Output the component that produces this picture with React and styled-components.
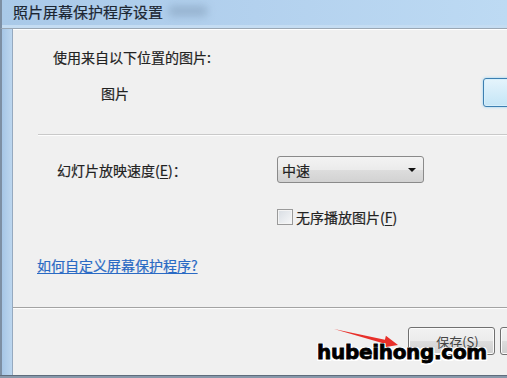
import styled, { createGlobalStyle } from 'styled-components';

const GlobalStyle = createGlobalStyle`
  html, body {
    margin: 0;
    padding: 0;
    background: #f0f0f0;
    overflow: hidden;
  }
  body {
    font-family: "Noto Sans CJK SC", "Noto Sans", sans-serif;
  }
`;

const Window = styled.div`
  position: relative;
  width: 507px;
  height: 378px;
  display: flex;
  flex-direction: column;
  overflow: hidden;
  background: #f0f0f0;
`;

const TitleBar = styled.div`
  height: 28px;
  flex-shrink: 0;
  display: flex;
  align-items: center;
  gap: 6px;
  padding-left: 11px;
  border-left: 2px solid #7d8fa3;
  border-bottom: 1px solid #9aa7b4;
  background: linear-gradient(90deg, #a9c9e8 0%, #b3d1ee 50%, #bddaf3 100%);
  box-shadow: inset 0 -3px 0 #c4dcf2;
`;

const Title = styled.span`
  font-size: 15px;
  line-height: 20px;
  color: #1c2632;
  margin-top: -5px;
  -webkit-text-stroke: 0.2px #1c2632;
`;

const Blur = styled.div`
  width: 38px;
  height: 10px;
  margin-top: -6px;
  background: #8eaac6;
  filter: blur(4px);
  opacity: 0.8;
`;

const Body = styled.div`
  flex: 1;
  display: flex;
  min-height: 0;
`;

const LeftFrame = styled.div`
  width: 10px;
  flex-shrink: 0;
  border-left: 2px solid #7d8fa3;
  border-right: 1px solid #95a9bf;
  background: linear-gradient(90deg, #a6c6e6, #bcd6ef);
`;

const Content = styled.div`
  flex: 1;
  min-width: 0;
  display: flex;
  flex-direction: column;
  overflow: hidden;
  background: #f0f0f0;
  border-top: 1px solid #ffffff;
`;

const Text = styled.div`
  font-size: 14px;
  line-height: 20px;
  color: #222;
  white-space: nowrap;
  -webkit-text-stroke: 0.2px #222;
`;

const SourceLabel = styled(Text)`
  margin: 17px 0 0 40px;
`;

const SourceRow = styled.div`
  display: flex;
  align-items: center;
  gap: 354px;
  margin-top: 11px;
  height: 29px;
  padding-left: 88px;
`;

const BrowseButton = styled.div`
  width: 80px;
  height: 27px;
  flex-shrink: 0;
  border: 1px solid #3c7fb1;
  border-radius: 3px;
  background: linear-gradient(#e5f4fc, #c4e5f6);
  box-shadow: 0 0 3px #8fd0f2, inset 0 0 0 1px #d6effb;
`;

const Separator = styled.div`
  height: 1px;
  flex-shrink: 0;
  margin-left: ${(p) => p.indent || 0}px;
  margin-top: ${(p) => p.top}px;
  background: ${(p) => p.color || '#c9c9c9'};
  border-bottom: 1px solid #fdfdfd;
`;

const SettingsGrid = styled.div`
  display: grid;
  grid-template-columns: 220px auto;
  justify-content: start;
  align-items: center;
  row-gap: 24px;
  margin-top: 20px;
  padding-left: 44px;
`;

const Select = styled.div`
  width: 147px;
  height: 27px;
  box-sizing: border-box;
  display: flex;
  align-items: center;
  justify-content: space-between;
  padding: 0 7px 0 4px;
  border: 1px solid #8a8a8a;
  border-radius: 3px;
  background: linear-gradient(#f3f3f3 0%, #ebebeb 50%, #dddddd 51%, #d2d2d2 100%);
  font-size: 14px;
  color: #222;
  -webkit-text-stroke: 0.2px #222;
`;

const Caret = styled.span`
  width: 0;
  height: 0;
  border-left: 4px solid transparent;
  border-right: 4px solid transparent;
  border-top: 4px solid #111;
`;

const CheckRow = styled.div`
  display: flex;
  align-items: center;
  gap: 3px;
`;

const Box = styled.span`
  width: 14px;
  height: 14px;
  border: 1px solid #9a9a9a;
  background: linear-gradient(135deg, #d8dde3, #f7f8f9);
  box-shadow: inset 0 0 0 1px #f4f4f4;
`;

const U = styled.span`
  text-decoration: underline;
  text-underline-offset: 2px;
`;

const HelpLink = styled(Text)`
  margin: 28px 0 0 24px;
  color: #2a6ac4;
  -webkit-text-stroke: 0.2px #2a6ac4;
  text-decoration: underline;
  text-underline-offset: 2px;
`;

const ButtonRow = styled.div`
  display: flex;
  gap: 5px;
  margin-top: 18px;
  padding-left: 395px;
`;

const Button = styled.div`
  width: ${(p) => p.width}px;
  height: 26px;
  flex-shrink: 0;
  display: flex;
  align-items: center;
  justify-content: center;
  border: 1px solid #707070;
  border-radius: 3px;
  background: linear-gradient(#f2f2f2 0%, #ebebeb 50%, #dddddd 51%, #cfcfcf 100%);
  box-shadow: inset 0 0 0 1px #fbfbfb;
  font-size: 13px;
  color: #444;
  padding-left: 12px;
  box-sizing: content-box;
`;

const BottomFrame = styled.div`
  height: 2px;
  flex-shrink: 0;
  border-top: 1px solid #5f6d7c;
  background: #8798aa;
`;

const Overlay = styled.svg`
  position: absolute;
  left: 0;
  top: 0;
  pointer-events: none;
`;

const Watermark = styled.div`
  position: absolute;
  left: 317px;
  top: 339px;
  font-family: "DejaVu Sans", sans-serif;
  font-weight: 700;
  font-size: 20px;
  line-height: 26px;
  color: #000;
  letter-spacing: -0.3px;
  -webkit-text-stroke: 0.8px #000;
  text-shadow: 1.5px 0 0 #fff, -1.5px 0 0 #fff, 0 1.5px 0 #fff, 0 -1.5px 0 #fff,
    1.5px 1.5px 0 #fff, -1.5px -1.5px 0 #fff, 1.5px -1.5px 0 #fff, -1.5px 1.5px 0 #fff;
`;

export default function App() {
  return (
    <>
      <GlobalStyle />
      <Window>
        <TitleBar>
          <Title>照片屏幕保护程序设置</Title>
          <Blur />
        </TitleBar>
        <Body>
          <LeftFrame />
          <Content>
            <SourceLabel>使用来自以下位置的图片:</SourceLabel>
            <SourceRow>
              <Text>图片</Text>
              <BrowseButton />
            </SourceRow>
            <Separator top={27} indent={25} />
            <SettingsGrid>
              <Text>
                幻灯片放映速度(<U>E</U>)：
              </Text>
              <Select>
                中速
                <Caret />
              </Select>
              <span />
              <CheckRow>
                <Box />
                <Text>
                  无序播放图片(<U>F</U>)
                </Text>
              </CheckRow>
            </SettingsGrid>
            <HelpLink>如何自定义屏幕保护程序?</HelpLink>
            <Separator top={32} color="#a3a3a3" />
            <ButtonRow>
              <Button width={73}>保存(S)</Button>
              <Button width={60} />
            </ButtonRow>
          </Content>
        </Body>
        <BottomFrame />
        <Overlay width="507" height="378" viewBox="0 0 507 378">
          <polygon
            points="334,329 384.9,339.7 385.9,335.8 398,345 382.9,347.4 383.9,343.5"
            fill="#e8302a"
          />
        </Overlay>
        <Watermark>hubeihong.com</Watermark>
      </Window>
    </>
  );
}
